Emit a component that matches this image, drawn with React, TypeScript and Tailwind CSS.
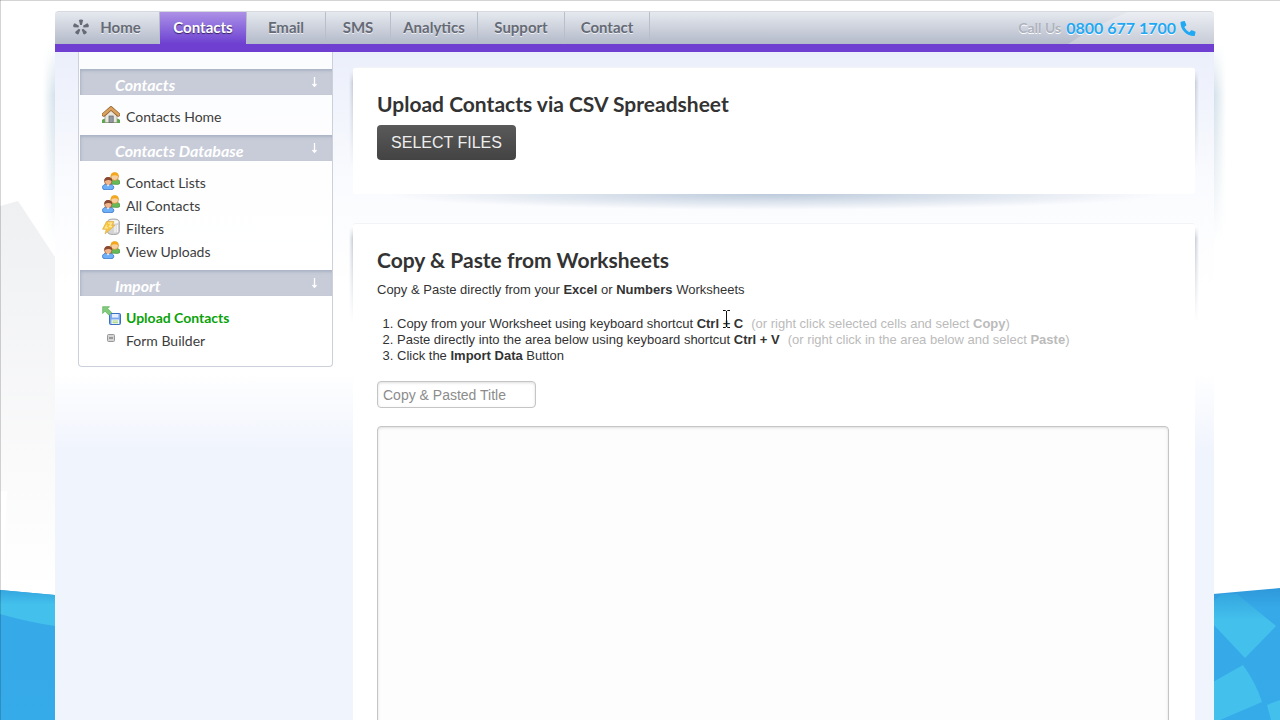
import type { ReactNode } from "react";
import { FaPhone } from "react-icons/fa";

const brandFont = "font-['Lato','Noto_Sans',sans-serif]";

function Star() {
  return (
    <svg viewBox="0 0 16 16" className="h-4 w-4" aria-hidden="true">
      {[0, 72, 144, 216, 288].map((a) => (
        <path key={a} d="M7.1 6 L6 1.600 Q6 .4 8 .4 Q10 .4 10 1.600 L8.9 6 Z" fill="#656a75" transform={`rotate(${a} 8 8.4)`} />
      ))}
    </svg>
  );
}

function HouseIcon() {
  return (
    <svg viewBox="0 0 18 18" className="h-[18px] w-[18px]" aria-hidden="true">
      <path d="M0 14 Q2 12 4.500 13 H13.500 Q16 12 18 14 V17 H0Z" fill="#58a84c" />
      <path d="M3 8.500 L9 3.500 L15 8.500 V16.500 H3Z" fill="#e9e6dd" stroke="#9a958a" strokeWidth=".7" />
      <rect x="7" y="10" width="4.200" height="6.500" fill="#929aa0" stroke="#62686b" strokeWidth=".7" />
      <path d="M1.700 8.700 L9 2.200 L16.300 8.700" fill="none" stroke="#8d5a2b" strokeWidth="4" strokeLinecap="round" strokeLinejoin="round" />
      <path d="M1.700 8.600 L9 2.200 L16.300 8.600" fill="none" stroke="#d9a25c" strokeWidth="2.700" strokeLinecap="round" strokeLinejoin="round" />
    </svg>
  );
}

function PeopleIcon() {
  return (
    <svg viewBox="0 0 18 18" className="h-[18px] w-[18px]" aria-hidden="true">
      <path d="M7.800 12 Q8 7 12.500 7 Q18 7 18 10.500 Q17.900 12.500 15.500 12.500Z" fill="#65b957" stroke="#3c8834" strokeWidth=".6" />
      <circle cx="12.700" cy="4.700" r="3.800" fill="#f7cf9f" stroke="#c78116" strokeWidth=".6" />
      <path d="M8.700 5 Q8.300 .2 12.700 .2 Q17 .2 16.600 5 Q15.500 3 13 3.200 Q10 3 8.700 5Z" fill="#f2a71c" />
      <path d="M.4 15.500 Q.6 12 5.800 12 Q11.800 12 11.800 15.500 Q11.800 17.700 8.800 17.700 H3 Q.4 17.700 .4 15.500Z" fill="#6eb0f7" stroke="#2c67bd" strokeWidth=".7" />
      <circle cx="6.200" cy="9.300" r="3.700" fill="#f0b58b" stroke="#8d4a2d" strokeWidth=".6" />
      <path d="M2.300 9.500 Q1.900 5 6.200 5 Q10.600 5 10.100 9.500 Q9 7.700 6.500 7.900 Q3.800 7.700 2.300 9.500Z" fill="#8a4a31" />
      <path d="M4.600 12.500 L6 14.500 L7.600 12.500Z" fill="#fff" />
    </svg>
  );
}

function FilterIcon() {
  return (
    <svg viewBox="0 0 18 18" className="h-[18px] w-[18px]" aria-hidden="true">
      <path d="M5.500 4 Q5.500 1 11.500 1 Q17.300 1 17.300 4 V13.500 Q17.300 16.500 11.500 16.500 Q5.500 16.500 5.500 13.500Z" fill="#d4d4d4" stroke="#a8a8a8" />
      <ellipse cx="11.500" cy="3.800" rx="5" ry="1.900" fill="#f7f7f7" />
      <path d="M13 7.500 V14.500 M15.300 7 V14" stroke="#f7f7f7" strokeWidth="1.300" />
      <path d="M4.500 3.500 H12 L10.500 7.300 H13 L3 16 L4.300 11.300 H.600Z" fill="#f9c540" stroke="#dcae4c" strokeWidth=".7" strokeLinejoin="round" />
      <path d="M5.900 5 H9.500 L7.500 8.700 H10 M5 7 L3.300 9.900 H6" fill="none" stroke="#ffe99a" strokeWidth="1.200" />
    </svg>
  );
}

function UploadIcon() {
  return (
    <svg viewBox="0 0 20 20" className="h-5 w-5" aria-hidden="true">
      <rect x="7.500" y="7.500" width="11" height="11" rx="1" fill="#7ba8ed" stroke="#3c6fc0" />
      <rect x="10" y="8" width="6.500" height="3.600" fill="#e4eefc" />
      <rect x="9.500" y="13.500" width="7.500" height="4.500" fill="#f5fbf0" />
      <path d="M10.500 15 H16 M10.500 16.700 H16" stroke="#9bcf76" strokeWidth=".9" />
      <path d="M.7 .7 H7.500 L5.600 2.700 L9.700 6.500 L7 9.200 L3 5.200 L.7 7.500Z" fill="#82ca7c" stroke="#68b665" strokeWidth=".8" />
    </svg>
  );
}

function BoxIcon() {
  return (
    <svg viewBox="0 0 18 18" className="h-[18px] w-[18px]" aria-hidden="true">
      <rect x="5.500" y="4.500" width="7" height="7" rx="1" fill="#d4d4d4" stroke="#989898" />
      <path d="M7 8 H11" stroke="#737373" strokeWidth="1.200" />
    </svg>
  );
}

const tabs = [
  { label: "Home", width: "w-[105px]" },
  { label: "Contacts", width: "w-[87px]" },
  { label: "Email", width: "w-[79px]" },
  { label: "SMS", width: "w-[65px]" },
  { label: "Analytics", width: "w-[87px]" },
  { label: "Support", width: "w-[87px]" },
  { label: "Contact", width: "w-[85px]" },
];

function Header() {
  return (
    <header className="relative flex h-[41px] items-stretch justify-between overflow-hidden rounded-t border-t border-b-8 border-t-[#d5d9df] border-b-[#6e3fd0] bg-linear-to-b from-[#e6e9ef] to-[#b3bac9]">
      <svg viewBox="0 0 146 32" preserveAspectRatio="none" className="absolute top-0 right-0 h-8 w-[146px]" aria-hidden="true">
        <path d="M0 32 Q30 12 60 0 H146 V32Z" fill="#fff" opacity=".25" />
      </svg>
      <nav className={`flex text-[15px] font-bold ${brandFont}`}>
        {tabs.map((t) => (
          <a
            key={t.label}
            href="#"
            className={`flex items-center justify-center border-r border-[#b9bfca] pb-0.5 ${t.width} ${
              t.label === "Contacts"
                ? "bg-linear-to-b from-[#ad90e6] to-[#6e3fd0] text-white [text-shadow:0_1px_1px_#35205f]"
                : "text-[#656a75] [text-shadow:0_1px_0_#eef0f4]"
            } ${t.label === "Home" ? "gap-[11px]" : ""}`}
          >
            {t.label === "Home" && <Star />}
            {t.label}
          </a>
        ))}
      </nav>
      <div className={`relative flex items-center gap-[5px] pr-[18px] font-bold [text-shadow:0_1px_0_#fff] ${brandFont}`}>
        <span className="text-sm text-[#adb2bd]">Call Us</span>
        <a href="tel:08006771700" className="flex items-center gap-1 text-base text-[#1fa8f3]">
          0800 677 1700
          <FaPhone className="h-[15px] w-4 -scale-x-100" />
        </a>
      </div>
    </header>
  );
}

type Item = { label: string; icon: ReactNode; active?: boolean };

const sections: { title: string; items: Item[] }[] = [
  { title: "Contacts", items: [{ label: "Contacts Home", icon: <HouseIcon /> }] },
  {
    title: "Contacts Database",
    items: [
      { label: "Contact Lists", icon: <PeopleIcon /> },
      { label: "All Contacts", icon: <PeopleIcon /> },
      { label: "Filters", icon: <FilterIcon /> },
      { label: "View Uploads", icon: <PeopleIcon /> },
    ],
  },
  {
    title: "Import",
    items: [
      { label: "Upload Contacts", icon: <UploadIcon />, active: true },
      { label: "Form Builder", icon: <BoxIcon /> },
    ],
  },
];

function Sidebar() {
  return (
    <aside className={`w-[255px] shrink-0 rounded-b border border-t-0 border-[#cbd0da] bg-white/80 pt-[17px] pb-[7px] pl-px ${brandFont}`}>
      {sections.map((s) => (
        <section key={s.title}>
          <h3 className="flex h-[26px] items-center justify-between bg-[#c8ccd8] pt-1.5 pr-[14px] pl-[35px] text-base font-bold text-white italic shadow-[inset_1px_2px_3px_#a9b3c4]">
            {s.title}
            <svg viewBox="0 0 7 12" className="mb-1.5 h-3 w-[7px]" aria-hidden="true">
              <path d="M3.500 1 V10 M1.500 8 L3.500 10.300 L5.500 8" fill="none" stroke="#fff" strokeWidth="1.300" />
            </svg>
          </h3>
          <ul className="pt-[10px] pb-[7px]">
            {s.items.map((i) => (
              <li key={i.label}>
                <a
                  href="#"
                  className={`flex h-[23px] items-center gap-1 pl-[22px] text-sm ${
                    i.active ? "font-bold text-[#0aa20a]" : "text-[#3d3d3d]"
                  }`}
                >
                  <span className="flex w-5 shrink-0 pb-1">{i.icon}</span>
                  {i.label}
                </a>
              </li>
            ))}
          </ul>
        </section>
      ))}
    </aside>
  );
}

function Card({ title, className, children }: { title: string; className: string; children: ReactNode }) {
  return (
    <section className={`relative ${className}`}>
      <span className="absolute top-1 -left-1 h-24 w-1 bg-linear-to-l from-[#c6ccd7] to-transparent [mask-image:linear-gradient(transparent,#000_12%,transparent)]" />
      <span className="absolute top-1 -right-1 h-24 w-1 bg-linear-to-r from-[#c6ccd7] to-transparent [mask-image:linear-gradient(transparent,#000_12%,transparent)]" />
      <span className="absolute inset-x-8 -bottom-4 h-4 bg-[radial-gradient(ellipse_50%_100%_at_50%_0,#bccadb,transparent)]" />
      <div className="relative rounded-[3px] border-t border-[#f1f3f7] bg-white px-6 pt-6">
        <h2 className={`text-[21px] leading-6 font-bold text-[#333] ${brandFont}`}>{title}</h2>
        {children}
      </div>
    </section>
  );
}

function Backdrop() {
  return (
    <svg viewBox="0 0 1280 720" preserveAspectRatio="none" className="absolute inset-0 h-full w-full" aria-hidden="true">
      <defs>
        <linearGradient id="stone" x1="0" y1="0" x2="0" y2="1">
          <stop offset="0" stopColor="#eff0f2" />
          <stop offset="1" stopColor="#ffffff" />
        </linearGradient>
        <linearGradient id="sea" x1="0" y1="0" x2="0" y2="1">
          <stop offset="0" stopColor="#2f98da" />
          <stop offset=".15" stopColor="#36a9e8" />
          <stop offset="1" stopColor="#36abe9" />
        </linearGradient>
        <linearGradient id="wave" x1="0" y1="0" x2="0" y2="1">
          <stop offset="0" stopColor="#34a6e0" />
          <stop offset=".4" stopColor="#43c0ec" />
        </linearGradient>
      </defs>
      <path d="M0 206 L18 201 L55 257 V590 H0Z" fill="url(#stone)" />
      <path d="M0 491 H7 L3 590 H0Z" fill="#fff" />
      <path d="M0 590 L55 595 V720 H0Z" fill="url(#sea)" />
      <path d="M0 590 L55 595 V626 Q28 622 0 614Z" fill="url(#wave)" />
      <path d="M1213 594 L1280 588 V720 H1213Z" fill="url(#sea)" />
      <path d="M1213 602 L1222 594 L1237 594 L1276 626 L1245 658 L1213 624Z" fill="url(#wave)" />
      <path d="M1213 682 L1243 665 Q1256 683 1262 702 L1220 720 H1213Z" fill="#43c0ec" />
      <path d="M1267 705 L1280 700 V720 H1271Z" fill="#43c0ec" />
      <path d="M0 .5 H1280 M.5 0 V720" stroke="#000" strokeOpacity=".17" />
    </svg>
  );
}

export default function App() {
  return (
    <div className="relative h-screen overflow-hidden bg-white font-['Liberation_Sans',Arial,sans-serif] text-[13px] text-[#333]">
      <Backdrop />
      <div className="relative h-full overflow-y-auto pt-[11px] pr-[66px] pl-[55px] [scrollbar-width:none]">
        <span className="absolute top-[45px] left-[43px] h-[200px] w-3 bg-linear-to-l from-[#d3e1ea] to-transparent [mask-image:linear-gradient(transparent,#000_25%,transparent)]" />
        <span className="absolute top-[45px] right-[54px] h-[200px] w-3 bg-linear-to-r from-[#d3e1ea] to-transparent [mask-image:linear-gradient(transparent,#000_25%,transparent)]" />
        <Header />
        <div className="relative flex items-start gap-5 bg-[linear-gradient(#ebeffb,#fafbfe_130px,#fff_240px,#fff_320px,#f0f4fd_400px)] pr-[19px] pl-[23px]">
          <Sidebar />
          <main className="min-w-0 flex-1 pt-[15px]">
            <Card title="Upload Contacts via CSV Spreadsheet" className="[&>div]:pb-[34px]">
              <button
                type="button"
                className="mt-[9px] block h-[35px] w-[139px] rounded-sm bg-linear-to-b from-[#5a5a5a] to-[#434343] text-base text-[#eee]"
              >
                SELECT FILES
              </button>
            </Card>
            <Card title="Copy & Paste from Worksheets" className="mt-[29px] [&>div]:pb-8">
              <p className="mt-[10px] leading-4">
                Copy &amp; Paste directly from your <b>Excel</b> or <b>Numbers</b> Worksheets
              </p>
              <ol className="mt-[18px] list-decimal pl-5 leading-4">
                <li>
                  Copy from your Worksheet using keyboard shortcut <b>Ctrl + C</b>
                  <span className="ml-2 text-[#bbb]">
                    (or right click selected cells and select <b>Copy</b>)
                  </span>
                </li>
                <li>
                  Paste directly into the area below using keyboard shortcut <b>Ctrl + V</b>
                  <span className="ml-2 text-[#bbb]">
                    (or right click in the area below and select <b>Paste</b>)
                  </span>
                </li>
                <li>
                  Click the <b>Import Data</b> Button
                </li>
              </ol>
              <input
                type="text"
                aria-label="Title"
                placeholder="Copy & Pasted Title"
                className="mt-[17px] block h-[27px] w-[159px] rounded border border-[#c5c5c5] bg-white px-[5px] text-sm shadow-[inset_0_1px_3px_#ddd] placeholder:text-[#8c8c8c]"
              />
              <textarea
                aria-label="Worksheet data"
                className="mt-[18px] block h-[400px] w-full max-w-[792px] resize-none rounded border border-[#c5c5c5] bg-[#fdfdfd] p-2 shadow-[inset_0_1px_3px_#ddd]"
              />
            </Card>
          </main>
        </div>
      </div>
      <svg viewBox="0 0 9 20" className="pointer-events-none absolute top-[309px] left-[722px] h-5 w-[9px]" aria-hidden="true">
        <path d="M1 1.500 H3.500 L4.500 2.500 L5.500 1.500 H8 M4.500 2 V18 M1 18.500 H3.500 L4.500 17.500 L5.500 18.500 H8" fill="none" stroke="#111" />
      </svg>
    </div>
  );
}
